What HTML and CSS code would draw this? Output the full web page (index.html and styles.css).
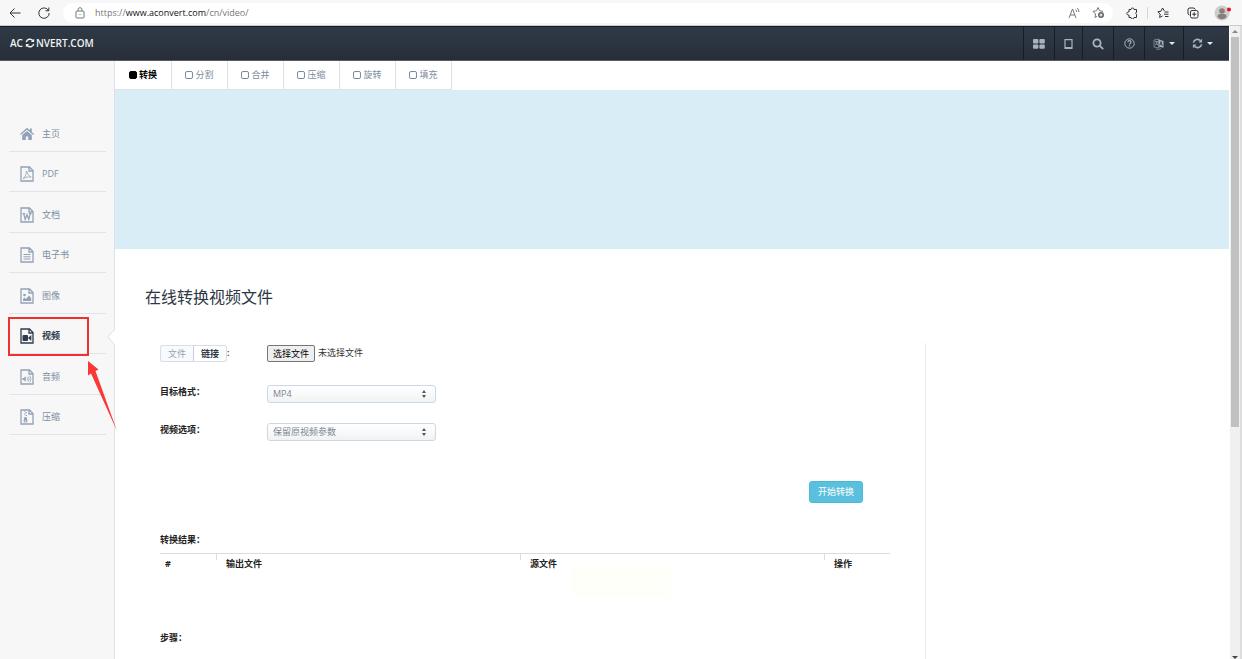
FILE: index.html
```html
<!DOCTYPE html>
<html lang="zh-CN">
<head>
    <meta charset="UTF-8">
    <meta name="viewport" content="width=device-width, initial-scale=1.0">
    <title>在线转换视频文件</title>
    <link rel="stylesheet" href="styles.css">
</head>
<body>
    <svg class="defs" aria-hidden="true">
        <symbol id="file" viewBox="0 0 14 16">
            <path d="M1 1h8.500l3.500 3.500v10.500h-12z M9 1v4h4" fill="none" stroke="currentColor" stroke-width="1.300"/>
        </symbol>
        <symbol id="sync" viewBox="0 0 12 12">
            <path d="M1.500 5A4.500 4.500 0 0 1 9.300 3M10.500 7A4.500 4.500 0 0 1 2.700 9" fill="none" stroke="currentColor" stroke-width="1.800"/>
            <path d="M11 .8v4H7zM1 11.200v-4h4z" fill="currentColor"/>
        </symbol>
    </svg>

    <header class="browser-bar">
        <button class="browser-btn" aria-label="返回">
            <svg width="14" height="14" viewBox="0 0 14 14" class="line"><path d="M12.500 7H2M6.500 2.500L2 7l4.500 4.500"/></svg>
        </button>
        <button class="browser-btn" aria-label="刷新">
            <svg width="14" height="14" viewBox="0 0 14 14" class="line"><path d="M11.500 4.500A5.200 5.200 0 1 0 12.200 7M11.800 1.500v3.300H8.500"/></svg>
        </button>
        <div class="address">
            <svg width="10" height="12" viewBox="0 0 10 12" class="line grey"><rect x="1" y="4" width="8" height="7" rx="1"/><path d="M3 4V2.700a2 2 0 0 1 4 0V4M5 7v1"/></svg>
            <span class="url">https://<b>www.aconvert.com</b>/cn/video/</span>
            <button class="browser-btn" aria-label="大声朗读">
                <svg width="12" height="12" viewBox="0 0 12 12" class="line grey"><path d="M1 11L4.500 2 8 11M2.200 8h4.600M7.500 2.500q1.200 1 1.200 2.500M9 1q2 1.500 2 4"/></svg>
            </button>
            <button class="browser-btn" aria-label="添加到收藏夹">
                <svg width="13" height="13" viewBox="0 0 13 13" class="line grey"><path d="M5 10.300L3 11.500l.5-3.500L1 5.300l3.500-.5L6 1.500l1.600 3.300 3.400.5"/><circle cx="9" cy="9" r="3" fill="#666" stroke="none"/><path d="M7.500 9h3M9 7.500v3" stroke="#fff"/></svg>
            </button>
        </div>
        <div class="browser-tools">
            <button class="browser-btn" aria-label="扩展">
                <svg width="12" height="12" viewBox="0 0 12 12" class="line"><path d="M3 2.500h2a1.500 1.500 0 0 1 3 0h2.500v2.600a1.500 1.500 0 0 0 0 2.400v3H8a1.500 1.500 0 0 1-3 0H3V8a1.600 1.600 0 1 1 0-3z"/></svg>
            </button>
            <span class="divider"></span>
            <button class="browser-btn" aria-label="收藏夹">
                <svg width="12" height="12" viewBox="0 0 12 12" class="line"><path d="M7.500 4L5.500 1 4 4.200.8 4.700 3.200 7l-.6 3.500 3-1.600M7.500 5h4M7 7.200h4.500M8 9.500h3.500"/></svg>
            </button>
            <button class="browser-btn" aria-label="集锦">
                <svg width="12" height="12" viewBox="0 0 12 12" class="line"><path d="M2.500 8L1 7V2l1-1h5l1.500 1.500"/><rect x="3.500" y="3.500" width="7.500" height="7.500" rx="1.500"/><path d="M7.200 5.200v4M5.200 7.200h4"/></svg>
            </button>
            <button class="browser-btn" aria-label="个人资料">
                <svg width="18" height="16" viewBox="0 0 18 16"><circle cx="8" cy="8" r="7.500" fill="#cfcccb"/><circle cx="8" cy="6" r="2.800" fill="#85807e"/><path d="M3.500 12q0-3 2.500-3h4q2.500 0 2.500 3-2 2.200-4.500 2.200T3.500 12z" fill="#85807e"/><circle cx="15" cy="4.500" r="2" fill="#e8101c"/></svg>
            </button>
        </div>
    </header>

    <div class="viewport">
        <div class="page">
            <nav class="navbar">
                <a class="brand" href="#">AC<svg width="10" height="10"><use href="#sync"/></svg>NVERT.COM</a>
                <div class="nav-tools">
                    <button aria-label="网格">
                        <svg width="12" height="10" viewBox="0 0 12 10" fill="currentColor"><rect width="5.400" height="4.400" rx="1"/><rect x="6.400" width="5.400" height="4.400" rx="1"/><rect y="5.400" width="5.400" height="4.400" rx="1"/><rect x="6.400" y="5.400" width="5.400" height="4.400" rx="1"/></svg>
                    </button>
                    <button class="narrow" aria-label="平板">
                        <svg width="9" height="10" viewBox="0 0 9 10"><path d="M1 .7h7v8.600H1z" fill="none" stroke="currentColor" stroke-width="1.200"/><path d="M1 8h7v1.500H1z" fill="currentColor"/></svg>
                    </button>
                    <button aria-label="搜索">
                        <svg width="12" height="12" viewBox="0 0 12 12" fill="none" stroke="currentColor" stroke-width="1.800"><circle cx="5" cy="5" r="3.600"/><path d="M7.700 7.700l3.500 3.500"/></svg>
                    </button>
                    <button aria-label="帮助">
                        <svg width="11" height="11" viewBox="0 0 11 11" fill="none" stroke="currentColor"><circle cx="5.500" cy="5.500" r="4.700"/><path d="M3.900 4.300q0-1.600 1.600-1.600t1.600 1.400q0 .8-.9 1.300-.7.400-.7 1.100M5.500 7.300v1.200" stroke-width="1.200"/></svg>
                    </button>
                    <button class="wide" aria-label="语言">
                        <svg width="12" height="12" viewBox="0 0 12 12" fill="none" stroke="currentColor"><path d="M1 2l5-1v9l-5-1zM2 3.500h3M3.500 3v2M2 7q2-.5 2.500-2.500M2.500 5l2.500 2M3 11q3 1 5-.5" stroke-width=".6"/><path d="M5.500 1.500l5 1.500v6.700l-5-1.200z" fill="currentColor" stroke="none"/><path d="M6.700 7.500l1.200-4 1.400 4.500M7 6.200h1.800" stroke="#2b333e" stroke-width=".8"/></svg>
                        <span class="caret"></span>
                    </button>
                    <button class="last" aria-label="转换">
                        <svg width="11" height="11"><use href="#sync"/></svg>
                        <span class="caret"></span>
                    </button>
                </div>
            </nav>

            <div class="layout">
                <aside class="sidebar">
                    <nav class="menu">
                        <a href="#">
                            <svg width="14" height="16" viewBox="0 0 14 16"><path d="M7 1.800L0 8l.8 1L7 3.800 13.200 9l.8-1-2.200-2V2.500H9.900v1.800z" fill="currentColor"/><path d="M2.200 9L7 5l4.800 4v5H8.200v-3.500H5.800V14H2.200z" fill="currentColor"/></svg>主页</a>
                        <a href="#">
                            <svg width="14" height="16" viewBox="0 0 14 16"><use href="#file"/><path d="M3 12.500q2.800-1.500 3.500-7.500.5 4 4.700 6-4.200-.7-8.200 1.500z" fill="none" stroke="currentColor" stroke-width=".8"/></svg>PDF</a>
                        <a href="#">
                            <svg width="14" height="16" viewBox="0 0 14 16"><use href="#file"/><path d="M2.500 6.700h2.600M9 6.700h2.600M3.800 7l1.400 5.500L7 7.500l1.800 5L10.200 7" fill="none" stroke="currentColor" stroke-width="1.200"/></svg>文档</a>
                        <a href="#">
                            <svg width="14" height="16" viewBox="0 0 14 16"><use href="#file"/><path d="M3.500 7.500h7M3.500 9.800h7M3.500 12h7" fill="none" stroke="currentColor"/></svg>电子书</a>
                        <a href="#">
                            <svg width="14" height="16" viewBox="0 0 14 16"><use href="#file"/><circle cx="4.500" cy="7" r="1.300" fill="currentColor"/><path d="M3 13v-2l1.500-1.500L6 11l3-3.500 2.200 2.500v3z" fill="currentColor"/></svg>图像</a>
                        <a href="#" class="active">
                            <svg width="14" height="16" viewBox="0 0 14 16"><use href="#file"/><rect x="2.500" y="7" width="5.500" height="6" rx="1" fill="currentColor"/><path d="M8 10l3.300-3v6z" fill="currentColor"/></svg>视频</a>
                        <a href="#">
                            <svg width="14" height="16" viewBox="0 0 14 16"><use href="#file"/><path d="M2.500 9h1.200l2-1.800v5.600l-2-1.800H2.500z" fill="currentColor"/><path d="M7 8.500q1 1.500 0 3M8.300 7.500q1.800 2.500 0 5M9.800 6.700q2.400 3.300 0 6.600" fill="none" stroke="currentColor" stroke-width=".8"/></svg>音频</a>
                        <a href="#">
                            <svg width="14" height="16" viewBox="0 0 14 16"><use href="#file"/><path d="M4 2h1.500M5.500 3.500H7M4 5h1.500M5.500 6.500H7" stroke="currentColor" stroke-width="1.200"/><path d="M4.500 8h2l1 4q0 1.500-2 1.500t-2-1.500z" fill="currentColor"/><path d="M4.700 12h1.600" stroke="#f7f7f7"/></svg>压缩</a>
                    </nav>
                    <svg class="notch" width="8" height="16" viewBox="0 0 8 16"><path d="M8 0L1 8l7 8" fill="#fff" stroke="#dbe2ea"/></svg>
                    <div class="highlight"></div>
                    <svg class="arrow" width="32" height="71" viewBox="0 0 32 71"><path d="M1 0l10.500 8.500-3 1.500L30 70 4 12.500 1 14.500z" fill="#f93838"/></svg>
                </aside>

                <main class="content">
                    <nav class="tabs">
                        <a href="#" class="active"><i></i>转换</a>
                        <a href="#"><i></i>分割</a>
                        <a href="#"><i></i>合并</a>
                        <a href="#"><i></i>压缩</a>
                        <a href="#"><i></i>旋转</a>
                        <a href="#"><i></i>填充</a>
                    </nav>
                    <div class="banner"></div>
                    <h1>在线转换视频文件</h1>

                    <div class="columns">
                        <form class="converter">
                            <div class="row">
                                <div class="source">
                                    <button type="button" class="pressed">文件</button><button type="button">链接</button>
                                    <span>:</span>
                                </div>
                                <div class="upload">
                                    <input type="file" id="file-input">
                                    <label for="file-input">选择文件</label>
                                    <span>未选择文件</span>
                                </div>
                            </div>
                            <div class="row">
                                <label for="format">目标格式：</label>
                                <div class="select">
                                    <select id="format"><option>MP4</option></select>
                                </div>
                            </div>
                            <div class="row">
                                <label for="option">视频选项：</label>
                                <div class="select">
                                    <select id="option"><option>保留原视频参数</option></select>
                                </div>
                            </div>
                            <div class="actions">
                                <button type="button" class="submit">开始转换</button>
                            </div>
                            <h2>转换结果：</h2>
                            <table class="results">
                                <thead>
                                    <tr><th class="num">#</th><th>输出文件</th><th>源文件</th><th class="op">操作</th></tr>
                                </thead>
                            </table>
                            <div class="notice"></div>
                            <h2>步骤：</h2>
                        </form>
                        <div class="side"></div>
                    </div>
                </main>
            </div>
        </div>

        <div class="scrollbar">
            <span class="up"></span>
            <span class="thumb"></span>
            <span class="down"></span>
        </div>
    </div>
</body>
</html>
```

FILE: styles.css
```css
* {
    box-sizing: border-box;
    margin: 0;
    padding: 0;
}

body {
    display: flex;
    flex-direction: column;
    height: 100vh;
    overflow: hidden;
    font-family: "Open Sans", "Noto Sans CJK SC", sans-serif;
    font-size: 9px;
    line-height: 14px;
    color: #222;
    background-color: #fff;
}

a {
    color: inherit;
    text-decoration: none;
}

button,
select {
    font: inherit;
    color: inherit;
}

svg {
    flex: none;
}

.defs {
    position: absolute;
    width: 0;
    height: 0;
}

.line {
    fill: none;
    stroke: #333;
    stroke-width: 1;
}

.grey {
    stroke: #777;
}

/* browser bar */
.browser-bar {
    display: flex;
    align-items: center;
    flex: none;
    height: 26px;
    padding-left: 3px;
    background-color: #f7f7f7;
    border-bottom: 1px solid #ccc;
}

.browser-btn {
    display: flex;
    align-items: center;
    justify-content: center;
    width: 24px;
    height: 20px;
    border: none;
    background: none;
}

.browser-bar > .browser-btn + .browser-btn {
    margin-left: 5px;
}

.address {
    display: flex;
    align-items: center;
    flex: 1;
    height: 20px;
    margin-left: 7px;
    padding: 0 3px 0 12px;
    border-radius: 10px;
    background-color: #fff;
}

.url {
    flex: 1;
    margin-left: 10px;
    color: #777;
}

.url b {
    font-weight: 400;
    color: #111;
}

.browser-tools {
    display: flex;
    align-items: center;
    gap: 6px;
    padding: 0 7px;
}

.divider {
    width: 1px;
    height: 12px;
    margin: 0 -3px;
    background-color: #d5d5d5;
}

.viewport {
    display: flex;
    flex: 1;
    min-height: 0;
}

.page {
    display: flex;
    flex-direction: column;
    flex: 1;
    min-width: 0;
}

/* top navbar */
.navbar {
    display: flex;
    justify-content: space-between;
    flex: none;
    height: 35px;
    color: #fff;
    background: linear-gradient(#2f3a46, #272e39);
    border-top: 1px solid #151b22;
    border-bottom: 1px solid #555b63;
}

.brand {
    display: flex;
    align-items: center;
    padding: 0 0 2px 10px;
    font-size: 10px;
    font-weight: 600;
    color: #f2f2f2;
}

.brand svg {
    margin: 0 1px 0 2px;
}

.nav-tools {
    display: flex;
    color: #a9b3bf;
}

.nav-tools button {
    display: flex;
    align-items: center;
    justify-content: center;
    gap: 4px;
    width: 31px;
    border: none;
    border-left: 1px solid #171d25;
    background: none;
}

.nav-tools .narrow {
    width: 28px;
}

.nav-tools .wide {
    width: 39px;
}

.nav-tools .last {
    width: 46px;
    padding-right: 8px;
}

.caret {
    border: 3px solid transparent;
    border-top-color: #e3e6ea;
    border-bottom: none;
}

.layout {
    display: flex;
    flex: 1;
    min-height: 0;
}

/* left menu */
.sidebar {
    position: relative;
    flex: none;
    width: 115px;
    padding: 50px 8px 0 9px;
    background-color: #f7f7f7;
    border-right: 1px solid #dbe2ea;
}

.menu {
    display: grid;
    grid-auto-rows: 1fr;
    height: 324px;
    color: #7d8da4;
}

.menu a {
    display: flex;
    align-items: center;
    gap: 8px;
    padding: 6px 0 0 11px;
    border-bottom: 1px solid #dfe4eb;
}

.menu svg {
    color: #93a2b7;
}

.menu .active,
.menu .active svg {
    font-weight: 700;
    color: #2f3b4c;
}

.notch {
    position: absolute;
    top: 268px;
    right: -1px;
}

.highlight {
    position: absolute;
    top: 256px;
    left: 8px;
    width: 81px;
    height: 39px;
    border: 2px solid #f03030;
}

.arrow {
    position: absolute;
    top: 300px;
    left: 87px;
    z-index: 1;
}

.content {
    flex: 1;
    min-width: 0;
}

.tabs {
    display: flex;
    height: 29px;
}

.tabs a {
    display: flex;
    align-items: center;
    justify-content: center;
    gap: 2px;
    width: 56px;
    padding-bottom: 1px;
    border-right: 1px solid #dbe2ea;
    border-bottom: 1px solid #dbe2ea;
    color: #7c8ba0;
}

.tabs .active {
    width: 57px;
    font-weight: 700;
    color: #000;
}

.tabs i {
    width: 8px;
    height: 8px;
    border: 1px solid currentColor;
    border-radius: 2px;
}

.tabs .active i {
    background-color: #000;
}

.banner {
    height: 159px;
    background-color: #d9edf7;
}

h1 {
    margin: 36px 0 34px 30px;
    font-size: 16px;
    font-weight: 400;
    line-height: 24px;
    color: #2e3745;
}

.columns {
    display: flex;
    height: 340px;
}

/* converter form */
.converter {
    flex: 1;
    padding: 1px 35px 0 45px;
}

.side {
    flex: none;
    width: 304px;
    border-left: 1px solid #e9ebed;
}

.row {
    display: flex;
    height: 18px;
    margin-bottom: 20px;
}

.row:first-child {
    margin-bottom: 23px;
}

.row > label,
.source {
    flex: none;
    width: 107px;
    font-weight: 600;
}

.source {
    display: flex;
    align-items: center;
}

.source button {
    width: 33px;
    height: 17px;
    border: 1px solid #d5dfeb;
    border-radius: 0 3px 3px 0;
    background-color: #fff;
    font-weight: 600;
    line-height: 13px;
    color: #2e3745;
}

.source .pressed {
    width: 34px;
    border-right: 1px solid #c5d0de;
    border-radius: 3px 0 0 3px;
    background-color: #f9fafb;
    font-weight: 400;
    color: #93a4bd;
}

.source .pressed + button {
    border-left: none;
}

.upload {
    display: flex;
    align-items: center;
    gap: 3px;
    color: #333;
}

.upload input {
    position: absolute;
    opacity: 0;
    width: 48px;
}

.upload label {
    width: 48px;
    height: 17px;
    border: 1px solid #767676;
    border-radius: 2px;
    background-color: #efefef;
    line-height: 15px;
    text-align: center;
    color: #000;
}

.select {
    position: relative;
    width: 169px;
}

.select select {
    width: 100%;
    height: 18px;
    padding-left: 5px;
    border: 1px solid #ccd8e5;
    border-radius: 3px;
    background: linear-gradient(#fff, #f1f3f3);
    color: #7b8795;
    appearance: none;
}

.select::before,
.select::after {
    content: "";
    position: absolute;
    right: 10px;
    border: 2px solid transparent;
}

.select::before {
    top: 5px;
    border-top: none;
    border-bottom: 3px solid #4d5765;
}

.select::after {
    top: 10px;
    border-bottom: none;
    border-top: 3px solid #4d5765;
}

.actions {
    display: flex;
    justify-content: flex-end;
    padding: 20px 27px 30px 0;
}

.submit {
    width: 54px;
    height: 22px;
    border: 1px solid #46b8da;
    border-radius: 3px;
    background-color: #5bc0de;
    line-height: 18px;
    color: #fff;
}

h2 {
    font-size: 9px;
    font-weight: 600;
    line-height: 14px;
}

.results {
    width: 100%;
    margin-top: 6px;
    border-collapse: collapse;
    border-top: 1px solid #ddd;
    table-layout: fixed;
}

.results th {
    padding: 3px 10px;
    text-align: left;
    background: linear-gradient(#ddd, #ddd) left top / 1px 6px no-repeat;
}

.results .num {
    width: 56px;
    padding-left: 5px;
    background: none;
}

.results .op {
    width: 66px;
}

.notice {
    width: 100px;
    height: 31px;
    margin: -8px 0 34px 411px;
    background-color: #fffffa;
}

/* page scrollbar */
.scrollbar {
    display: flex;
    flex-direction: column;
    align-items: center;
    flex: none;
    width: 13px;
    border-right: 2px solid #ddd;
    border-left: 1px solid #fff;
    background-color: #f0f0f0;
}

.scrollbar .up,
.scrollbar .down {
    border: 3px solid transparent;
}

.scrollbar .up {
    margin: 4px 0;
    border-top: none;
    border-bottom-color: #888;
}

.scrollbar .thumb {
    width: 8px;
    height: 390px;
    background-color: #c1c1c1;
}

.scrollbar .down {
    margin-top: auto;
    border-bottom: none;
    border-top-color: #444;
}
```
